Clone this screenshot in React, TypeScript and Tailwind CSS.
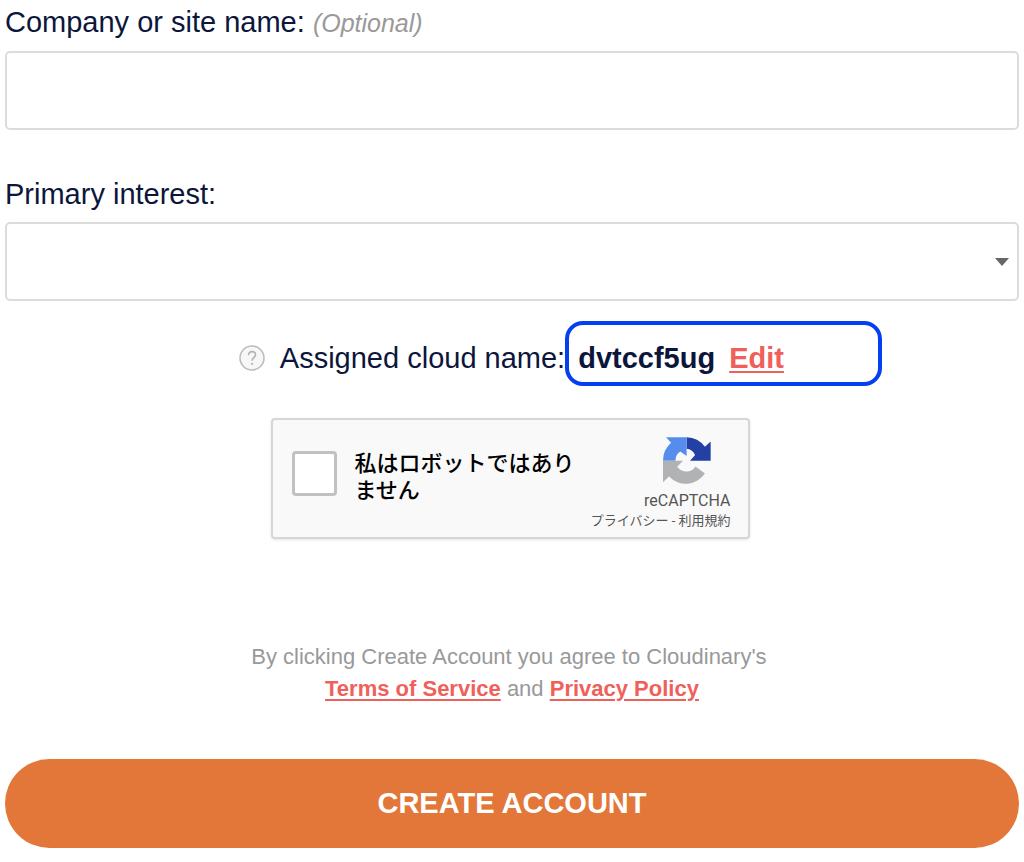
function RecaptchaLogo() {
  return (
    <svg viewBox="0 1 142 142" className="size-12" aria-hidden="true">
      <path
        fill="#2340a5"
        d="M70 2A70 70 0 0 1 124 30L141 14V71H80L95 54Q86 37 70 36Z"
      />
      <path
        fill="#568ded"
        d="M70 2H9L24 18A70 70 0 0 0 0 71H37Q36 54 51 44L70 57Z"
      />
      <path
        fill="#b1b2b3"
        d="M0 71H59L42 89Q52 103 70 103Q87 103 96 88L124 109A68 68 0 0 1 18 118L0 135Z"
      />
    </svg>
  );
}

function Recaptcha() {
  return (
    <div className="mt-8 flex h-[121px] w-[479px] self-center rounded-[4px] border-2 border-[#d6d6d6] bg-[#f9f9f9] pr-[17px] pl-[19px] font-['Roboto','Noto_Sans_CJK_JP',sans-serif] shadow-[0_1px_3px_rgba(0,0,0,0.1)]">
      <input
        id="robot"
        type="checkbox"
        className="mt-[31px] size-[45px] shrink-0 appearance-none rounded-[4px] border-3 border-[#c1c1c1] bg-white"
      />
      <label
        htmlFor="robot"
        className="mt-[30px] ml-[18px] w-[224px] shrink-0 text-[22px] leading-[27px] font-medium text-black"
      >
        私はロボットではあり
        <br />
        ません
      </label>
      <div className="ml-auto flex flex-col items-end pt-[17px] text-[#555]">
        <div className="flex flex-col items-center">
          <RecaptchaLogo />
          <span className="mt-1 text-[16px] leading-6">reCAPTCHA</span>
        </div>
        <div className="-ml-20 text-[13px] leading-4 whitespace-nowrap">
          <a href="#privacy">プライバシー</a> - <a href="#terms">利用規約</a>
        </div>
      </div>
    </div>
  );
}

export default function App() {
  return (
    <form
      className="flex flex-col bg-white px-[5px] pt-1 pb-[14px] font-['Liberation_Sans',Arial,sans-serif] text-[#0c163b]"
      onSubmit={(e) => e.preventDefault()}
    >
      <label htmlFor="company" className="text-[29px] leading-9">
        Company or site name:{" "}
        <em className="text-[25px] leading-8 text-[#999]">(Optional)</em>
      </label>
      <input
        id="company"
        type="text"
        className="mt-[11px] h-[79px] w-full rounded-[5px] border-2 border-[#dcdcdc] bg-white px-4 text-[29px]"
      />

      <label htmlFor="interest" className="mt-[46px] text-[29px] leading-9">
        Primary interest:
      </label>
      <div className="mt-[10px] grid items-center">
        <select
          id="interest"
          className="col-start-1 row-start-1 h-[79px] w-full appearance-none rounded-[5px] border-2 border-[#dcdcdc] bg-white px-4 text-[29px]"
        >
          <option value=""></option>
        </select>
        <svg
          viewBox="0 0 14 8"
          className="pointer-events-none col-start-1 row-start-1 mr-[10px] h-2 w-[14px] justify-self-end"
          aria-hidden="true"
        >
          <path d="M0 0h14L7 8z" fill="#666" />
        </svg>
      </div>

      <div className="mt-5 flex items-center justify-center text-[29px] leading-9">
        <button type="button" aria-label="Help" className="mt-2 mr-[15px]">
          <svg viewBox="0 0 26 26" className="size-[26px]" aria-hidden="true">
            <circle cx="13" cy="13" r="12" fill="#f7f7f7" stroke="#bcbcbc" strokeWidth="1.6" />
            <path
              d="M9.5 10.2c0-2.2 1.4-3.6 3.5-3.6s3.5 1.3 3.5 3.2c0 2.8-3.4 3-3.4 6"
              fill="none"
              stroke="#b4b4b4"
              strokeWidth="1.6"
            />
            <circle cx="13.1" cy="18.8" r="1.1" fill="#b4b4b4" />
          </svg>
        </button>
        <span className="mt-2">Assigned cloud name:</span>
        <div className="-mr-[97px] flex h-[65px] w-[317px] items-center gap-[14px] rounded-[18px] border-4 border-[#0440f2] pt-2 pl-[9px] font-bold">
          <span>dvtccf5ug</span>
          <a href="#edit" className="text-[#f0605a] underline decoration-2 underline-offset-3">
            Edit
          </a>
        </div>
      </div>

      <div className="flex flex-col pr-1">
        <Recaptcha />
      </div>

      <p className="mt-[102px] text-center text-[22px] leading-8 text-[#999]">
        By clicking Create Account you agree to Cloudinary's&nbsp;
        <br />
        <a href="#tos" className="font-bold text-[#f0605a] underline decoration-2 underline-offset-3">
          Terms of Service
        </a>{" "}
        and{" "}
        <a href="#policy" className="font-bold text-[#f0605a] underline decoration-2 underline-offset-3">
          Privacy Policy
        </a>
      </p>

      <button
        type="submit"
        className="mt-[54px] h-[89px] w-full rounded-full bg-[#e27739] text-[29px] font-bold text-white"
      >
        CREATE ACCOUNT
      </button>
    </form>
  );
}
